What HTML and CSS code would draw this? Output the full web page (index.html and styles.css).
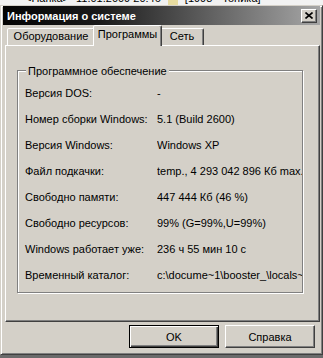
FILE: index.html
```html
<!DOCTYPE html>
<html lang="ru">
<head>
  <meta charset="UTF-8" />
  <title>Информация о системе</title>
  <link rel="stylesheet" href="styles.css">
</head>
<body>
  <div class="desk-strip">
    <div class="desk-line">
      <span>&lt;Папка&gt;</span>
      <span>11.01.2009 20:46</span>
      <span class="folder"></span>
      <span>[1998 - Тоника]</span>
    </div>
  </div>

  <div class="window">
    <div class="titlebar">
      <span class="title">Информация о системе</span>
      <button class="close" title="Закрыть">
        <svg width="8" height="7" viewBox="0 0 8 7">
          <path d="M0.5 0.5 L7.5 6.5 M7.5 0.5 L0.5 6.5" stroke="#000" stroke-width="1.6" fill="none" />
        </svg>
      </button>
    </div>

    <div class="dialog">
      <div class="tabs">
        <div class="tab tab-hw">Оборудование</div>
        <div class="tab tab-sw active">Программы</div>
        <div class="tab tab-net">Сеть</div>
      </div>

      <div class="panel">
        <div class="group">
          <div class="group-title">Программное обеспечение</div>
          <div class="rows">
            <div class="row"><span class="label">Версия DOS:</span><span class="value">-</span></div>
            <div class="row"><span class="label">Номер сборки Windows:</span><span class="value">5.1 (Build 2600)</span></div>
            <div class="row"><span class="label">Версия Windows:</span><span class="value">Windows XP</span></div>
            <div class="row"><span class="label">Файл подкачки:</span><span class="value">temp., 4 293 042 896 Кб max.</span></div>
            <div class="row"><span class="label">Свободно памяти:</span><span class="value">447 444 Кб (46 %)</span></div>
            <div class="row"><span class="label">Свободно ресурсов:</span><span class="value">99% (G=99%,U=99%)</span></div>
            <div class="row"><span class="label">Windows работает уже:</span><span class="value">236 ч 55 мин 10 с</span></div>
            <div class="row"><span class="label">Временный каталог:</span><span class="value">c:\docume~1\booster_\locals~1\temp</span></div>
          </div>
        </div>
      </div>

      <div class="buttons">
        <button class="btn default">OK</button>
        <button class="btn">Справка</button>
      </div>
    </div>
  </div>
</body>
</html>
```

FILE: styles.css
```css
* {
  box-sizing: border-box;
}

body {
  margin: 0;
  width: 323px;
  height: 358px;
  overflow: hidden;
  background: #6b6b6b;
  font-family: "Liberation Sans", Arial, sans-serif;
  font-size: 11px;
  color: #000;
}

/* kusok okna pod dialogom */
.desk-strip {
  height: 5px;
  overflow: hidden;
  background: #f2f2f2;
}

.desk-line {
  margin-top: -8px;
  height: 13px;
  line-height: 13px;
  padding-left: 25px;
  display: flex;
  align-items: center;
  gap: 7px;
  white-space: nowrap;
}

.folder {
  width: 10px;
  height: 13px;
  background: #e8dca0;
}

.window {
  width: 323px;
  background: #d4d0c8;
  border: 1px solid;
  border-color: #d4d0c8 #404040 #404040 #d4d0c8;
  box-shadow: inset 1px 1px #fff, inset -1px -1px #808080;
  padding: 0 2px 2px;
}

.titlebar {
  height: 19px;
  display: flex;
  align-items: center;
  justify-content: space-between;
  padding: 0 3px 0 4px;
  background: linear-gradient(to right, #040404 0%, #1a1a1a 30%, #a6a6a6 100%);
}

.title {
  color: #fff;
  font-weight: bold;
  font-size: 11px;
}

.close {
  width: 16px;
  height: 14px;
  padding: 0;
  background: #d4d0c8;
  border: 1px solid;
  border-color: #fff #404040 #404040 #fff;
  box-shadow: inset -1px -1px #808080;
  display: flex;
  align-items: center;
  justify-content: center;
}

.dialog {
  padding: 0 0 4px 2px;
}

.tabs {
  height: 20px;
  display: flex;
  align-items: flex-end;
  padding-left: 2px;
}

.tab {
  height: 17px;
  line-height: 15px;
  text-align: center;
  background: #d4d0c8;
  border: 1px solid;
  border-bottom: none;
  border-color: #fff #404040 transparent #fff;
  border-radius: 2px 2px 0 0;
  box-shadow: inset -1px 0 #808080;
  white-space: nowrap;
}

.tab-hw {
  width: 88px;
}

.tab-sw {
  width: 65px;
}

.tab-net {
  width: 44px;
}

.tab.active {
  width: 69px;
  height: 21px;
  line-height: 17px;
  margin: 0 -2px -1px;
  position: relative;
  z-index: 1;
}

.panel {
  height: 277px;
  border: 1px solid;
  border-color: #fff #404040 #404040 #fff;
  box-shadow: inset -1px -1px #808080;
  padding: 24px 0 0 11px;
}

.group {
  width: 286px;
  border: 1px solid #808080;
  box-shadow: inset 1px 1px #fff, 1px 1px #fff;
  padding-bottom: 4px;
}

.group-title {
  width: fit-content;
  margin: -6px 0 0 8px;
  padding: 0 2px;
  line-height: 13px;
  background: #d4d0c8;
}

.rows {
  margin-top: 2px;
}

.row {
  display: flex;
  height: 26px;
  line-height: 26px;
  padding-left: 7px;
  white-space: nowrap;
}

.label {
  width: 132px;
  flex-shrink: 0;
}

.value {
  flex: 1;
  overflow: hidden;
}

.buttons {
  display: flex;
  justify-content: flex-end;
  gap: 6px;
  padding: 3px 5px 0 0;
}

.btn {
  width: 90px;
  height: 23px;
  padding: 0;
  font: inherit;
  color: #000;
  background: #d4d0c8;
  border: 1px solid;
  border-color: #fff #404040 #404040 #fff;
  box-shadow: inset -1px -1px #808080;
}

.btn.default {
  border: 1px solid #000;
  box-shadow: inset 1px 1px #fff, inset -1px -1px #404040, inset -2px -2px #808080;
}
```
